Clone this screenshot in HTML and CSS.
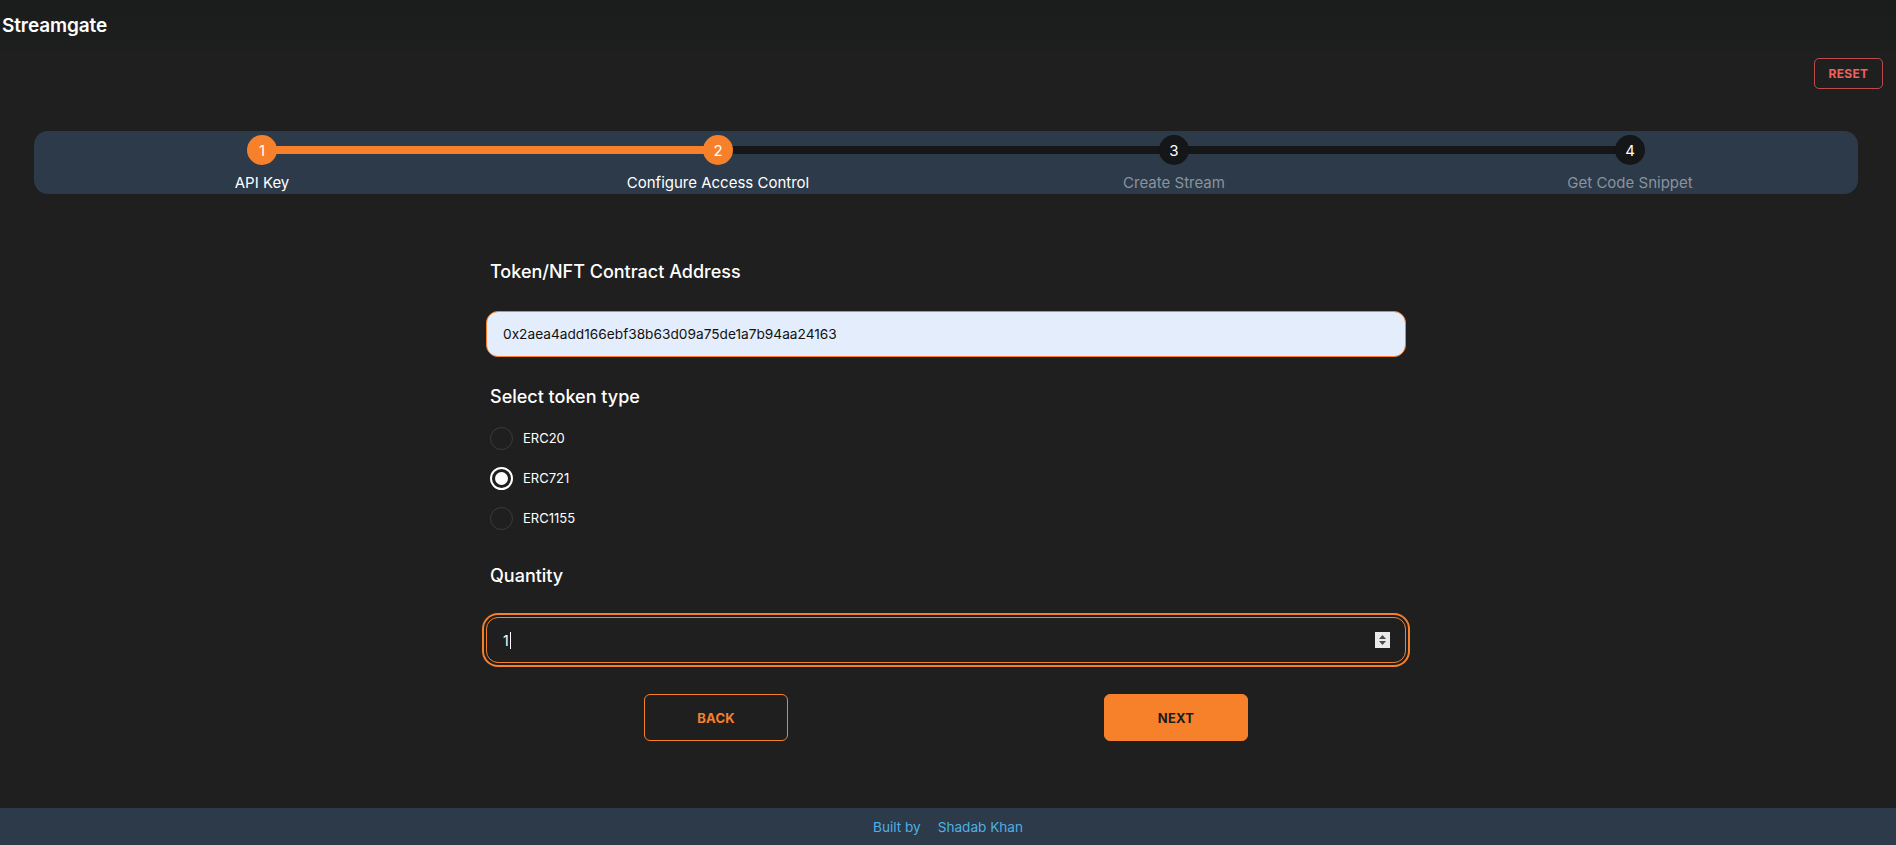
FILE: index.html
```html
<!DOCTYPE html>
<html lang="en">
<head>
<meta charset="utf-8">
<title>Streamgate</title>
<link rel="stylesheet" href="styles.css">
</head>
<body>
<div class="page">
  <header class="header">
    <div class="brand">Streamgate</div>
  </header>

  <div class="reset-row">
    <button class="btn-reset" type="button">RESET</button>
  </div>

  <div class="stepper">
    <div class="step done">
      <div class="step-icon">1</div>
      <div class="step-label">API Key</div>
    </div>
    <div class="step done">
      <div class="connector active"></div>
      <div class="step-icon">2</div>
      <div class="step-label">Configure Access Control</div>
    </div>
    <div class="step todo">
      <div class="connector"></div>
      <div class="step-icon">3</div>
      <div class="step-label">Create Stream</div>
    </div>
    <div class="step todo">
      <div class="connector"></div>
      <div class="step-icon">4</div>
      <div class="step-label">Get Code Snippet</div>
    </div>
  </div>

  <main class="form">
    <div class="field-label first">Token/NFT Contract Address</div>
    <div class="input input-light">0x2aea4add166ebf38b63d09a75de1a7b94aa24163</div>

    <div class="field-label second">Select token type</div>
    <div class="radio-group">
      <div class="radio-row"><span class="radio"></span><span class="radio-text">ERC20</span></div>
      <div class="radio-row"><span class="radio checked"></span><span class="radio-text">ERC721</span></div>
      <div class="radio-row"><span class="radio"></span><span class="radio-text">ERC1155</span></div>
    </div>

    <div class="field-label third">Quantity</div>
    <div class="input input-dark">
      <span class="qty-value">1</span><span class="caret"></span>
      <span class="spinner">
        <svg width="15" height="16" viewBox="0 0 15 16"><rect width="15" height="16" fill="#e9e9e9"/><path d="M4 7 L7.5 3 L11 7 Z" fill="#4a4a4a"/><path d="M4 9 L7.5 13 L11 9 Z" fill="#4a4a4a"/></svg>
      </span>
    </div>

    <div class="actions">
      <div class="action-cell"><button class="btn btn-back" type="button">BACK</button></div>
      <div class="action-cell"><button class="btn btn-next" type="button">NEXT</button></div>
    </div>
  </main>

  <footer class="footer">
    <span class="footer-text">Built by</span>
    <span class="footer-link">Shadab Khan</span>
  </footer>
</div>
</body>
</html>
```

FILE: styles.css
```css
* { box-sizing: border-box; }

html, body {
  margin: 0;
  padding: 0;
  background: #1f1f1f;
  font-family: Inter, "Noto Sans", "Liberation Sans", sans-serif;
  color: #ffffff;
}

.page {
  min-height: 100vh;
  display: flex;
  flex-direction: column;
}

.header {
  height: 50px;
  display: flex;
  align-items: center;
  padding-left: 2px;
  background: linear-gradient(#1b1c1c, #1d1e1e);
}

.brand {
  font-size: 19px;
  font-weight: 600;
  letter-spacing: -0.1px;
}

.reset-row {
  display: flex;
  justify-content: flex-end;
  padding-right: 13px;
  margin-top: 8px;
}

.btn-reset {
  width: 69px;
  height: 31px;
  background: transparent;
  border: 1px solid rgba(240, 90, 90, 0.75);
  border-radius: 5px;
  color: #f2605c;
  font-family: Inter, "Liberation Sans", sans-serif;
  font-size: 12px;
  font-weight: 700;
  letter-spacing: 0.3px;
  padding: 0;
}

.stepper {
  margin: 42px 38px 0 34px;
  height: 63px;
  background: #2c3a4a;
  border-radius: 14px;
  display: flex;
  padding-top: 4px;
}

.step {
  flex: 1;
  display: flex;
  flex-direction: column;
  align-items: center;
  position: relative;
}

.connector {
  position: absolute;
  top: 11px;
  left: -50%;
  right: 50%;
  height: 8px;
  background: #141617;
  z-index: 0;
}

.connector.active { background: #f7812b; }

.step-icon {
  position: relative;
  z-index: 1;
  width: 30px;
  height: 30px;
  border-radius: 50%;
  display: flex;
  align-items: center;
  justify-content: center;
  font-size: 15px;
  font-weight: 400;
  color: #ffffff;
}

.step.done .step-icon { background: #f7812b; }
.step.todo .step-icon { background: #141617; }

.step-label {
  margin-top: 8px;
  font-size: 15px;
  line-height: 19px;
  font-weight: 400;
}

.step.done .step-label { color: #ffffff; }
.step.todo .step-label { color: #8a939c; }

.form {
  width: 920px;
  margin: 0 0 0 calc(50% - 462px);
  display: flex;
  flex-direction: column;
}

.field-label {
  font-size: 18px;
  line-height: 24px;
  font-weight: 500;
  padding-left: 4px;
}

.field-label.first { margin-top: 66px; }
.field-label.second { margin-top: 28px; }
.field-label.third { margin-top: 26px; }

.input {
  height: 46px;
  border: 1px solid #f7812b;
  border-radius: 12px;
  display: flex;
  align-items: center;
  padding: 0 15px 0 16px;
  font-size: 13.7px;
}

.input-light {
  margin-top: 27px;
  background: #e3edfb;
  color: #111111;
}

.radio-group {
  margin-top: 9px;
  display: flex;
  flex-direction: column;
}

.radio-row {
  height: 40px;
  display: flex;
  align-items: center;
  padding-left: 4px;
}

.radio {
  width: 23px;
  height: 23px;
  border-radius: 50%;
  border: 1px solid #3c3c3c;
  display: flex;
  align-items: center;
  justify-content: center;
}

.radio.checked {
  border: 2px solid #ffffff;
}

.radio.checked::after {
  content: "";
  width: 13px;
  height: 13px;
  border-radius: 50%;
  background: #ffffff;
}

.radio-text {
  margin-left: 10px;
  font-size: 13px;
  color: #ffffff;
}

.input-dark {
  margin-top: 29px;
  background: #1f1f1f;
  color: #ffffff;
  box-shadow: 0 0 0 2px #1f1f1f, 0 0 0 4px #f7812b;
}

.qty-value { font-size: 14px; }

.caret {
  width: 1px;
  height: 17px;
  background: #ffffff;
  margin-left: 1px;
}

.spinner {
  margin-left: auto;
  display: flex;
  margin-right: 0;
}

.actions {
  margin-top: 31px;
  display: flex;
}

.action-cell {
  flex: 1;
  display: flex;
  justify-content: center;
}

.btn {
  width: 144px;
  height: 47px;
  border-radius: 6px;
  font-family: Inter, "Liberation Sans", sans-serif;
  font-size: 13px;
  font-weight: 700;
  letter-spacing: 0.2px;
  padding: 0;
}

.btn-back {
  background: transparent;
  border: 1px solid #f7812b;
  color: #f7812b;
}

.btn-next {
  background: #f7812b;
  border: 1px solid #f7812b;
  color: #1c1c1c;
}

.footer {
  margin-top: auto;
  height: 37px;
  background: #2c3a4a;
  display: flex;
  align-items: center;
  justify-content: center;
  gap: 17px;
  font-size: 13.6px;
  color: #4fb0e4;
}
```
